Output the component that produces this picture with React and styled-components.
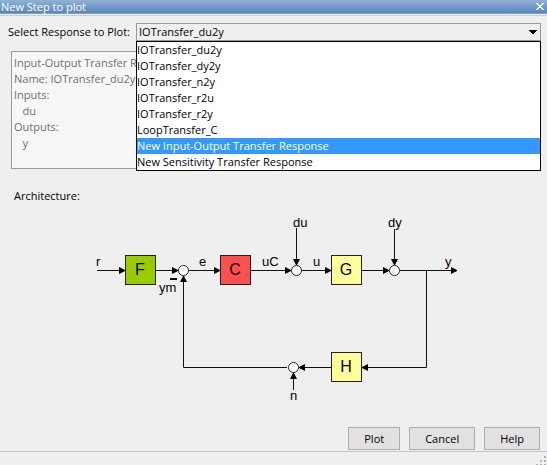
import React, { useState } from "react";
import styled, { createGlobalStyle } from "styled-components";

const GlobalStyle = createGlobalStyle`
  * { box-sizing: border-box; }
  body {
    margin: 0;
    background: #efefef;
    color: #000;
    font: 11px/16px "Open Sans", "Noto Sans", sans-serif;
  }
`;

const Dialog = styled.main`
  display: flex;
  flex-direction: column;
  min-height: 100vh;
`;

const TitleBar = styled.header`
  display: flex;
  align-items: center;
  justify-content: space-between;
  height: 14px;
  padding: 0 3px 0 1px;
  background: linear-gradient(#92b1d2, #5387c3);
  border-bottom: 1px solid #8a9cae;
  color: #fff;
`;

const Title = styled.h1`
  margin: 0;
  font-size: 11px;
  line-height: 15px;
  font-weight: 400;
`;

const CloseButton = styled.button`
  display: flex;
  padding: 0;
  border: 0;
  background: none;
  color: #fff;
`;

const Body = styled.div`
  flex: 1;
  padding: 7px 6px 0 8px;
  border-top: 1px solid #c3d0da;
  margin-top: 1px;
`;

const Field = styled.div`
  display: flex;
  align-items: center;
  gap: 4px;
`;

const FieldLabel = styled.label`
  flex: 0 0 124px;
  white-space: nowrap;
`;

const Combo = styled.div`
  position: relative;
  flex: 1;
  display: flex;
  align-items: center;
`;

const ComboSelect = styled.select`
  appearance: none;
  width: 100%;
  height: 18px;
  padding: 0 20px 0 2px;
  border: 1px solid #999;
  border-radius: 0;
  outline: 0;
  background: #efefef;
  color: #000;
  font: inherit;
`;

const ComboArrow = styled.svg`
  position: absolute;
  right: 4px;
  pointer-events: none;
`;

const Options = styled.ul`
  position: absolute;
  z-index: 1;
  top: 100%;
  left: 0;
  right: 0;
  margin: 0;
  padding: 0;
  border: 1px solid #000;
  background: #fff;
  list-style: none;
`;

const Option = styled.li`
  height: 16px;
  background: ${(p) => (p.$active ? "#3399ff" : "transparent")};
  color: ${(p) => (p.$active ? "#fff" : "#000")};
  white-space: nowrap;
`;

const Details = styled.pre`
  min-height: 118px;
  margin: 10px 3px 0;
  padding: 3px 2px;
  border: 1px solid #999;
  background: #f7f7f7;
  color: #707070;
  font: inherit;
`;

const SectionTitle = styled.h2`
  margin: 19px 6px 0;
  font-size: 11px;
  line-height: 16px;
  font-weight: 400;
`;

const Diagram = styled.svg`
  display: block;
  margin: 6px auto 0;
  font-family: "Liberation Sans", Arial, sans-serif;
`;

const Signal = styled.text`
  font-size: 13px;
`;

const BlockName = styled.text`
  font-size: 16px;
  text-anchor: middle;
`;

const Actions = styled.footer`
  display: flex;
  justify-content: flex-end;
  gap: 9px;
  padding: 0 7px;
  border-bottom: 1px solid #bcc8d0;
`;

const Button = styled.button`
  height: 23px;
  margin-bottom: 1px;
  padding: 0 15px;
  border: 1px solid #adadad;
  background: #e1e1e1;
  color: #000;
  font: inherit;
`;

const StatusBar = styled.div`
  display: flex;
  justify-content: flex-end;
  align-items: flex-end;
  height: 13px;
`;

const RESPONSES = [
  "IOTransfer_du2y",
  "IOTransfer_dy2y",
  "IOTransfer_n2y",
  "IOTransfer_r2u",
  "IOTransfer_r2y",
  "LoopTransfer_C",
  "New Input-Output Transfer Response",
  "New Sensitivity Transfer Response",
];

const BLOCKS = [
  { name: "F", x: 125, y: 255, fill: "#99cc00" },
  { name: "C", x: 220, y: 255, fill: "#ff5050" },
  { name: "G", x: 331, y: 255, fill: "#ffff99" },
  { name: "H", x: 331, y: 352, fill: "#ffff99" },
];

const SUMS = [[183, 270], [296, 270], [394, 270], [293, 367]];

const SIGNALS = [
  ["r", 96, 266],
  ["ym", 159, 292],
  ["e", 199, 266],
  ["uC", 262, 266],
  ["du", 293, 227],
  ["u", 313, 266],
  ["dy", 388, 227],
  ["y", 445, 266],
  ["n", 290, 400],
];

const WIRES = [
  "M97 270.5H124",
  "M156 270.5H177",
  "M189 270.5H219",
  "M251 270.5H290",
  "M302 270.5H330",
  "M362 270.5H388",
  "M400 270.5H456",
  "M296.5 228V264",
  "M394.5 229V264",
  "M426.5 270V367.5H363",
  "M331 367.5H300",
  "M287 367.5H183.5V277",
  "M293.5 390V374",
];

function LoopDiagram() {
  return (
    <Diagram width="375" height="200" viewBox="87 210 375 200" role="img" aria-label="Control loop architecture">
      <defs>
        <marker id="arrow" markerUnits="userSpaceOnUse" markerWidth="6" markerHeight="7" refX="5" refY="3.5" orient="auto">
          <path d="M0 0L6 3L6 4L0 7Z" />
        </marker>
      </defs>
      {WIRES.map((d) => (
        <path key={d} d={d} fill="none" stroke="#111" markerEnd="url(#arrow)" />
      ))}
      <path d="M170 279H177" stroke="#000" strokeWidth="2" />
      {BLOCKS.map((b) => (
        <g key={b.name}>
          <rect x={b.x + 0.5} y={b.y + 0.5} width="30" height="29" fill={b.fill} stroke="#222" />
          <BlockName x={b.x + 15} y={b.y + 20}>{b.name}</BlockName>
        </g>
      ))}
      {SUMS.map(([x, y]) => (
        <circle key={`${x}-${y}`} cx={x + 0.5} cy={y + 0.5} r="5" fill="#fff" stroke="#222" />
      ))}
      {SIGNALS.map(([name, x, y]) => (
        <Signal key={name} x={x} y={y}>{name}</Signal>
      ))}
    </Diagram>
  );
}

export default function App() {
  const [selected, setSelected] = useState(RESPONSES[0]);
  const [active, setActive] = useState(RESPONSES[6]);

  return (
    <>
      <GlobalStyle />
      <Dialog>
        <TitleBar>
          <Title>New Step to plot</Title>
          <CloseButton type="button" aria-label="Close">
            <svg width="8" height="7" viewBox="0 0 8 7" shapeRendering="crispEdges" fill="currentColor">
              <path d="M0 0h2v1h-2zM6 0h2v1h-2zM1 1h2v1h-2zM5 1h2v1h-2zM2 2h4v1h-4zM3 3h2v1h-2zM2 4h4v1h-4zM1 5h2v1h-2zM5 5h2v1h-2zM0 6h2v1h-2zM6 6h2v1h-2z" />
            </svg>
          </CloseButton>
        </TitleBar>
        <Body>
          <Field>
            <FieldLabel htmlFor="response">Select Response to Plot:</FieldLabel>
            <Combo>
              <ComboSelect id="response" value={selected} onChange={(e) => setSelected(e.target.value)}>
                {RESPONSES.map((r) => (
                  <option key={r}>{r}</option>
                ))}
              </ComboSelect>
              <ComboArrow width="8" height="4" viewBox="0 0 8 4" shapeRendering="crispEdges">
                <path d="M0 0h8v1h-1v1h-1v1h-1v1h-2v-1h-1v-1h-1v-1h-1z" />
              </ComboArrow>
              <Options role="listbox" aria-label="Responses">
                {RESPONSES.map((r) => (
                  <Option
                    key={r}
                    role="option"
                    aria-selected={r === active}
                    $active={r === active}
                    onMouseEnter={() => setActive(r)}
                    onClick={() => setSelected(r)}
                  >
                    {r}
                  </Option>
                ))}
              </Options>
            </Combo>
          </Field>
          <Details>{`Input-Output Transfer Response
Name: IOTransfer_du2y
Inputs:
   du
Outputs:
   y`}</Details>
          <SectionTitle>Architecture:</SectionTitle>
          <LoopDiagram />
        </Body>
        <Actions>
          <Button type="button">Plot</Button>
          <Button type="button">Cancel</Button>
          <Button type="button">Help</Button>
        </Actions>
        <StatusBar>
          <svg width="12" height="10" viewBox="0 0 12 10" fill="#b5b3a5" shapeRendering="crispEdges" aria-hidden="true">
            <path d="M9 1h2v2h-2zM5 5h2v2h-2zM9 5h2v2h-2zM1 9h2v1h-2zM5 9h2v1h-2zM9 9h2v1h-2z" />
          </svg>
        </StatusBar>
      </Dialog>
    </>
  );
}
